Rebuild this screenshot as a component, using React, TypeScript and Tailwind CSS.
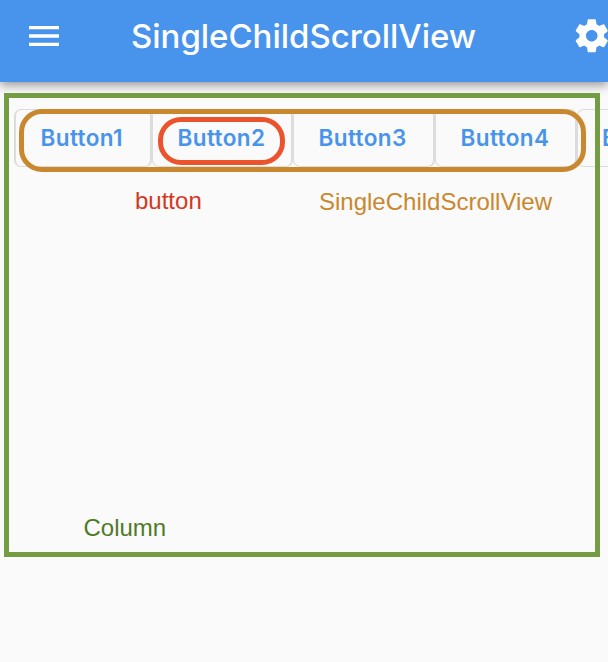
import type { ReactNode } from "react";
import { MdMenu } from "react-icons/md";

function SettingsIcon({ className }: { className: string }) {
  return (
    <svg viewBox="0 0 24 24" fill="currentColor" className={className}>
      <path d="M19.43 12.98c.04-.32.07-.64.07-.98s-.03-.66-.07-.98l2.11-1.65c.19-.15.24-.42.12-.64l-2-3.46c-.12-.22-.39-.3-.61-.22l-2.49 1c-.52-.4-1.08-.73-1.69-.98l-.38-2.65C14.46 2.18 14.25 2 14 2h-4c-.25 0-.46.18-.49.42l-.38 2.65c-.61.25-1.17.59-1.69.98l-2.49-1c-.23-.09-.49 0-.61.22l-2 3.46c-.13.22-.07.49.12.64l2.11 1.65c-.04.32-.07.65-.07.98s.03.66.07.98l-2.11 1.65c-.19.15-.24.42-.12.64l2 3.46c.12.22.39.3.61.22l2.49-1c.52.4 1.08.73 1.69.98l.38 2.65c.03.24.24.42.49.42h4c.25 0 .46-.18.49-.42l.38-2.65c.61-.25 1.17-.59 1.69-.98l2.49 1c.23.09.49 0 .61-.22l2-3.46c.12-.22.07-.49-.12-.64l-2.11-1.65zM12 15.5c-1.93 0-3.5-1.57-3.5-3.5s1.57-3.5 3.5-3.5 3.5 1.57 3.5 3.5-1.57 3.5-3.5 3.5z" />
    </svg>
  );
}

function ScrollButton({ children, className }: { children: ReactNode; className: string }) {
  return (
    <button
      className={`h-[58px] shrink-0 rounded-[7px] border border-r-2 border-[#dcdcdc] text-left font-['Inter'] text-[22.5px] font-semibold leading-none tracking-[0.4px] whitespace-nowrap text-[#4894ec] ${className}`}
    >
      {children}
    </button>
  );
}

export default function App() {
  return (
    <div className="relative h-[662px] w-[608px] overflow-hidden bg-[#fafafa] font-['Liberation_Sans',sans-serif]">
      <header className="flex h-[82px] items-start bg-[#4894ec] text-white shadow-[0_3px_10px_0_rgba(0,0,0,0.42)]">
        <MdMenu className="mt-4 ml-6 size-10 shrink-0" />
        <h1 className="mt-4 ml-[67px] w-[420px] shrink-0 font-['Inter'] text-[33px] leading-10 font-medium tracking-[-0.03px] whitespace-nowrap">
          SingleChildScrollView
        </h1>
        <SettingsIcon className="mt-4 ml-[20.5px] size-[39.5px] shrink-0" />
      </header>

      <main className="relative mt-[11px] ml-1 h-[464px] w-[596px]">
        <div className="flex pt-4 pl-2.5">
          <ScrollButton className="w-[138px] border-l-2 pl-[24.5px]">Button1</ScrollButton>
          <ScrollButton className="w-[141px] pl-[24.5px]">Button2</ScrollButton>
          <ScrollButton className="w-[142px] pl-[24.5px]">Button3</ScrollButton>
          <ScrollButton className="w-[142px] pl-[24.5px]">Button4</ScrollButton>
          <ScrollButton className="w-[142px] pl-6">Button5</ScrollButton>
        </div>
        <div className="mt-5 flex text-2xl leading-7">
          <span className="ml-[131px] w-[184px] text-[#d2381f]">button</span>
          <span className="pt-px text-[#c9882d]">SingleChildScrollView</span>
        </div>
        <p className="mt-[298px] ml-[79.5px] text-2xl leading-7 text-[#4f7a28]">Column</p>

        {/* Outlines marking each widget's bounds */}
        <div className="absolute inset-0 border-[5px] border-[#739c43]" />
        <div className="absolute top-4 left-[15px] h-[63px] w-[567px] rounded-[23px] border-[5px] border-[#c9882d]" />
        <div className="absolute top-6 left-[154px] h-12 w-[127px] rounded-[23px] border-[5px] border-[#eb532d]" />
      </main>
    </div>
  );
}
